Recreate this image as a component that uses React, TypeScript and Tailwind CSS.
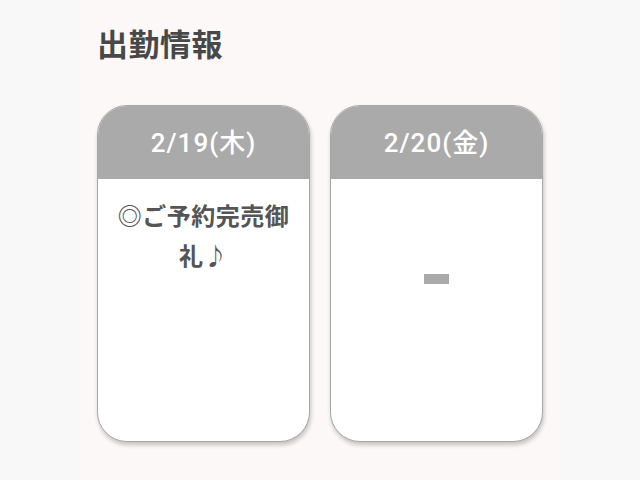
const days = [
  { date: "2/19(木)", note: "◎ご予約完売御礼♪" },
  { date: "2/20(金)", note: null },
];

export default function App() {
  return (
    <div
      className="flex h-[480px] w-[640px] justify-center bg-[#f8f8f8]"
      style={{ fontFamily: '"Noto Sans CJK JP", "Noto Sans", sans-serif' }}
    >
      <section className="w-[480px] bg-[#fcf8f7] px-[17px] pt-[22px]">
        <h2 className="text-[31px] font-semibold leading-[42px] tracking-[0.5px] text-[#484848]">出勤情報</h2>

        <div className="mt-[41px] flex gap-[20px]">
          {days.map((d) => (
            <div
              key={d.date}
              className="flex h-[337px] w-[213px] flex-col overflow-hidden rounded-[30px] border border-[#a8a8a8] bg-white shadow-[1px_3px_4px_rgba(0,0,0,0.22)]"
            >
              <div
                className="flex h-[73px] items-center justify-center bg-[#aaaaaa] pt-[2px] text-[26px] font-medium tracking-[1px] text-white"
                style={{ fontFamily: 'Roboto, "Noto Sans CJK JP", sans-serif' }}
              >
                {d.date}
              </div>
              <div className="px-[12px] pt-[16px] text-center">
                {d.note ? (
                  <p className="text-[24px] font-bold leading-[40px] tracking-[0.5px] text-[#555555]">{d.note}</p>
                ) : (
                  <div className="flex justify-center pt-[79px]">
                    <span className="block h-[10px] w-[25px] bg-[#aaaaaa]" />
                  </div>
                )}
              </div>
            </div>
          ))}
        </div>
      </section>
    </div>
  );
}
